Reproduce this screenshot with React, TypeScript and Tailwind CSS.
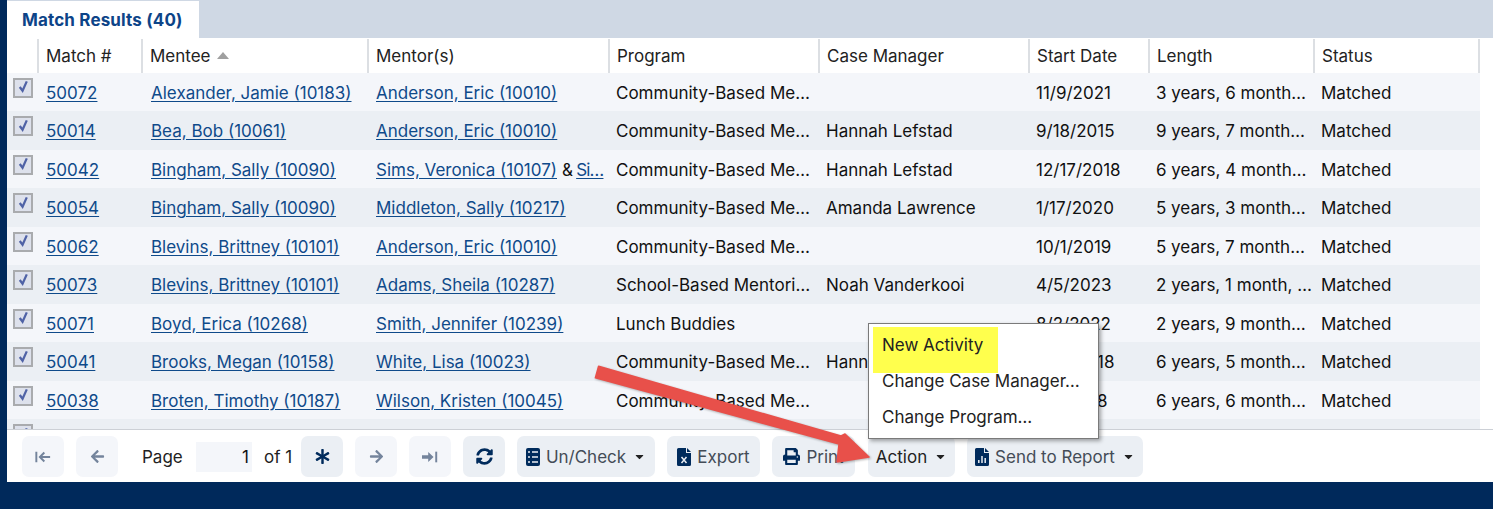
import React from "react";
import { FaAsterisk, FaSyncAlt, FaPrint, FaArrowLeft, FaArrowRight, FaCaretDown } from "react-icons/fa";

const FONT = "[font-family:'Inter','Liberation_Sans',sans-serif]";

type Row = { id: string; mentee: string; mentor: React.ReactNode; program: string; cm: string; start: string; len: string };

const rows: Row[] = [
  { id: "50072", mentee: "Alexander, Jamie (10183)", mentor: "Anderson, Eric (10010)", program: "Community-Based Me…", cm: "", start: "11/9/2021", len: "3 years, 6 month…" },
  { id: "50014", mentee: "Bea, Bob (10061)", mentor: "Anderson, Eric (10010)", program: "Community-Based Me…", cm: "Hannah Lefstad", start: "9/18/2015", len: "9 years, 7 month…" },
  { id: "50042", mentee: "Bingham, Sally (10090)", mentor: "Sims, Veronica (10107)", program: "Community-Based Me…", cm: "Hannah Lefstad", start: "12/17/2018", len: "6 years, 4 month…" },
  { id: "50054", mentee: "Bingham, Sally (10090)", mentor: "Middleton, Sally (10217)", program: "Community-Based Me…", cm: "Amanda Lawrence", start: "1/17/2020", len: "5 years, 3 month…" },
  { id: "50062", mentee: "Blevins, Brittney (10101)", mentor: "Anderson, Eric (10010)", program: "Community-Based Me…", cm: "", start: "10/1/2019", len: "5 years, 7 month…" },
  { id: "50073", mentee: "Blevins, Brittney (10101)", mentor: "Adams, Sheila (10287)", program: "School-Based Mentori…", cm: "Noah Vanderkooi", start: "4/5/2023", len: "2 years, 1 month, …" },
  { id: "50071", mentee: "Boyd, Erica (10268)", mentor: "Smith, Jennifer (10239)", program: "Lunch Buddies", cm: "", start: "8/2/2022", len: "2 years, 9 month…" },
  { id: "50041", mentee: "Brooks, Megan (10158)", mentor: "White, Lisa (10023)", program: "Community-Based Me…", cm: "Hannah Lefstad", start: "12/5/2018", len: "6 years, 5 month…" },
  { id: "50038", mentee: "Broten, Timothy (10187)", mentor: "Wilson, Kristen (10045)", program: "Community-Based Me…", cm: "", start: "11/1/2018", len: "6 years, 6 month…" },
  { id: "50033", mentee: "Brown, Lucas (10152)", mentor: "Taylor, Megan (10071)", program: "Community-Based Me…", cm: "", start: "6/1/2018", len: "6 years, 11 mont…" },
];

const GRID = "grid grid-cols-[32px_104px_226px_241px_210px_210px_120px_165px_165px]";
const headers = ["Match #", "Mentee", "Mentor(s)", "Program", "Case Manager", "Start Date", "Length", "Status"];

function Checkbox() {
  return (
    <div className="mt-[5px] ml-[6px] flex h-[20px] w-[20px] items-center justify-center border-2 border-[#a9abae] bg-[#dde1ec]">
      <svg viewBox="0 0 16 16" className="h-[15px] w-[15px]" fill="none" stroke="#4f62a6" strokeWidth="2.4">
        <path d="M4 7.5 L7 11.5 L11.5 1.5" />
      </svg>
    </div>
  );
}

function Link({ children }: { children: React.ReactNode }) {
  return <span className="text-[#0f4a8a] underline underline-offset-2">{children}</span>;
}

function Btn({ children, strong }: { children: React.ReactNode; strong?: boolean }) {
  return (
    <div className={`flex h-[41px] w-[42px] shrink-0 items-center justify-center rounded-[7px] ${strong ? "bg-[#ebeff4]" : "bg-[#f4f6fa]"}`}>
      {children}
    </div>
  );
}

function TextBtn({ icon, label, w, caret, dark }: { icon?: React.ReactNode; label: string; w: string; caret?: boolean; dark?: boolean }) {
  return (
    <div className={`flex h-[41px] shrink-0 items-center justify-center gap-[6px] rounded-[7px] bg-[#ebeff4] ${dark ? "text-[#222]" : "text-[#444c57]"} ${w}`}>
      {icon}
      <span>{label}</span>
      {caret && <FaCaretDown className="ml-[1px] h-[13px] w-[13px] text-[#222]" />}
    </div>
  );
}

function ListIcon() {
  return (
    <svg viewBox="0 0 14 18" className="h-[18px] w-[14px]">
      <rect x="0" y="0" width="14" height="18" rx="2" fill="#002b5c" />
      <path d="M2 4h2M2 9h2M2 14h2M6 4h6M6 9h6M6 14h6" stroke="#ebeff4" strokeWidth="1.5" />
    </svg>
  );
}

function XlsIcon() {
  return (
    <svg viewBox="0 0 14 18" className="h-[18px] w-[14px]">
      <path d="M0 1.5A1.5 1.5 0 0 1 1.5 0H9v5h5v11.5a1.5 1.5 0 0 1-1.5 1.5h-11A1.5 1.5 0 0 1 0 16.5z" fill="#002b5c" />
      <path d="M10 0l4 4h-4z" fill="#002b5c" />
      <path d="M4.5 9l5 6M9.5 9l-5 6" stroke="#ebeff4" strokeWidth="1.5" />
    </svg>
  );
}

function ChartIcon() {
  return (
    <svg viewBox="0 0 14 18" className="h-[18px] w-[14px]">
      <path d="M0 1.5A1.5 1.5 0 0 1 1.5 0H9v5h5v11.5a1.5 1.5 0 0 1-1.5 1.5h-11A1.5 1.5 0 0 1 0 16.5z" fill="#002b5c" />
      <path d="M10 0l4 4h-4z" fill="#002b5c" />
      <path d="M3.8 15v-3M7 15V8M10.2 15v-5" stroke="#ebeff4" strokeWidth="1.5" />
    </svg>
  );
}

export default function App() {
  return (
    <div className={`${FONT} relative h-[509px] w-[1493px] overflow-hidden bg-[#00295b] text-[17px] leading-[24px] text-[#111]`}>
      <div className="ml-[7px] flex h-[482px] flex-col bg-white">
        <div className="flex h-[38px] shrink-0 items-start bg-[#cfd8e4]">
          <div className="mt-px flex h-[37px] w-[192px] items-center whitespace-nowrap bg-white pl-[15px] text-[17px] font-bold tracking-[0.15px] text-[#0d4488]">
            Match Results (40)
          </div>
        </div>
        <div className="h-[391px] w-[1473px] shrink-0 overflow-hidden pt-px">
          <div className={`${GRID} h-[33.5px]`}>
            <div className="border-r-2 border-[#dcdfe3]" />
            {headers.map((h) => (
              <div key={h} className="flex items-center gap-[6px] border-r-2 border-[#dcdfe3] pl-[7px] text-[#222]">
                {h}
                {h === "Mentee" && (
                  <svg viewBox="0 0 12 7" className="h-[7px] w-[12px]">
                    <path d="M0 7L6 0l6 7z" fill="#a0a0a0" />
                  </svg>
                )}
              </div>
            ))}
          </div>
          {rows.map((r, i) => (
            <div key={r.id} className={`${GRID} h-[38.5px] ${i % 2 === 0 ? "bg-[#f4f6fa]" : "bg-[#ebeff4]"}`}>
              <div className="flex items-start">
                <Checkbox />
              </div>
              <div className="flex items-center pl-[7px] pt-[2px]"><Link>{r.id}</Link></div>
              <div className="flex items-center whitespace-nowrap pl-[8px] pt-[2px]"><Link>{r.mentee}</Link></div>
              <div className="flex items-center overflow-hidden whitespace-nowrap pl-[7px] pt-[2px]">
                <Link>{r.mentor}</Link>
                {i === 2 && <span className="ml-[5px] tracking-[-0.8px]">&amp; <Link>Si…</Link></span>}
              </div>
              <div className="flex items-center whitespace-nowrap pl-[6px] pt-[2px]">{r.program}</div>
              <div className="flex items-center whitespace-nowrap pl-[6px] pt-[2px]">{r.cm}</div>
              <div className="flex items-center whitespace-nowrap pl-[6px] pt-[2px]">{r.start}</div>
              <div className="flex items-center whitespace-nowrap pl-[6px] pt-[2px]">{r.len}</div>
              <div className="flex items-center pl-[6px] pt-[2px]">Matched</div>
            </div>
          ))}
        </div>
        <div className="flex h-[53px] shrink-0 items-center border-t border-[#ccd0d6] pl-[15px] pt-px">
          <Btn>
            <svg viewBox="0 0 18 14" className="h-[14px] w-[16px]" fill="none" stroke="#74849c" strokeWidth="2.2">
              <path d="M1.5 1v12M17 7H6M10.5 2L5.5 7l5 5" />
            </svg>
          </Btn>
          <div className="ml-[12px]">
            <Btn><FaArrowLeft className="h-[15px] w-[15px] text-[#74849c]" /></Btn>
          </div>
          <span className="ml-[24px] w-[42px] text-[#222]">Page</span>
          <div className="ml-[12px] flex h-[30px] w-[56px] items-center justify-end bg-[#f4f6fa] pr-[3px]">1</div>
          <span className="ml-[12px] w-[37px] whitespace-nowrap text-[#222]">of 1</span>
          <Btn strong><FaAsterisk className="h-[15px] w-[15px] text-[#002b5c]" /></Btn>
          <div className="ml-[12px]"><Btn><FaArrowRight className="h-[15px] w-[15px] text-[#74849c]" /></Btn></div>
          <div className="ml-[12px]">
            <Btn>
              <svg viewBox="0 0 18 14" className="h-[14px] w-[16px]">
                <path d="M0 5h7V1.5L13 7l-6 5.5V9H0z" fill="#74849c" />
                <path d="M16 1v12" stroke="#74849c" strokeWidth="2.2" />
              </svg>
            </Btn>
          </div>
          <div className="ml-[12px]"><Btn strong><FaSyncAlt className="h-[17px] w-[17px] text-[#002b5c]" /></Btn></div>
          <div className="ml-[12px]"><TextBtn icon={<ListIcon />} label="Un/Check" w="w-[138px]" caret /></div>
          <div className="ml-[12px]"><TextBtn icon={<XlsIcon />} label="Export" w="w-[93px]" /></div>
          <div className="ml-[12px]"><TextBtn icon={<FaPrint className="h-[17px] w-[17px] text-[#002b5c]" />} label="Print" w="w-[83px]" /></div>
          <div className="ml-[13px]"><TextBtn label="Action" w="w-[87px]" caret dark /></div>
          <div className="ml-[12px]"><TextBtn icon={<ChartIcon />} label="Send to Report" w="w-[176px]" caret /></div>
        </div>
      </div>

      {/* dropdown menu */}
      <div className="absolute left-[868px] top-[323px] flex h-[116px] w-[231px] flex-col border border-[#7a7a7a] bg-white pl-[13px] pt-[3px] leading-[36px] text-[#222] shadow-[2px_2px_4px_rgba(0,0,0,0.35)]">
        <div className="absolute left-[4px] top-[3px] h-[46px] w-[125px] bg-[#ffff4d]" />
        <div className="relative whitespace-nowrap">New Activity</div>
        <div className="relative whitespace-nowrap">Change Case Manager…</div>
        <div className="relative whitespace-nowrap">Change Program…</div>
      </div>

      {/* annotation arrow */}
      <svg className="absolute left-[585px] top-[360px] drop-shadow-[1px_1px_1px_rgba(0,0,0,0.3)]" width="290" height="110" viewBox="0 0 290 110">
        <path d="M10.4 17.8 L13.6 6.2 L256 76 L260 74 L284 97 L252 102 L254 84 Z" fill="#e8504a" stroke="#e8504a" strokeWidth="1.5" strokeLinejoin="round" />
      </svg>
    </div>
  );
}
